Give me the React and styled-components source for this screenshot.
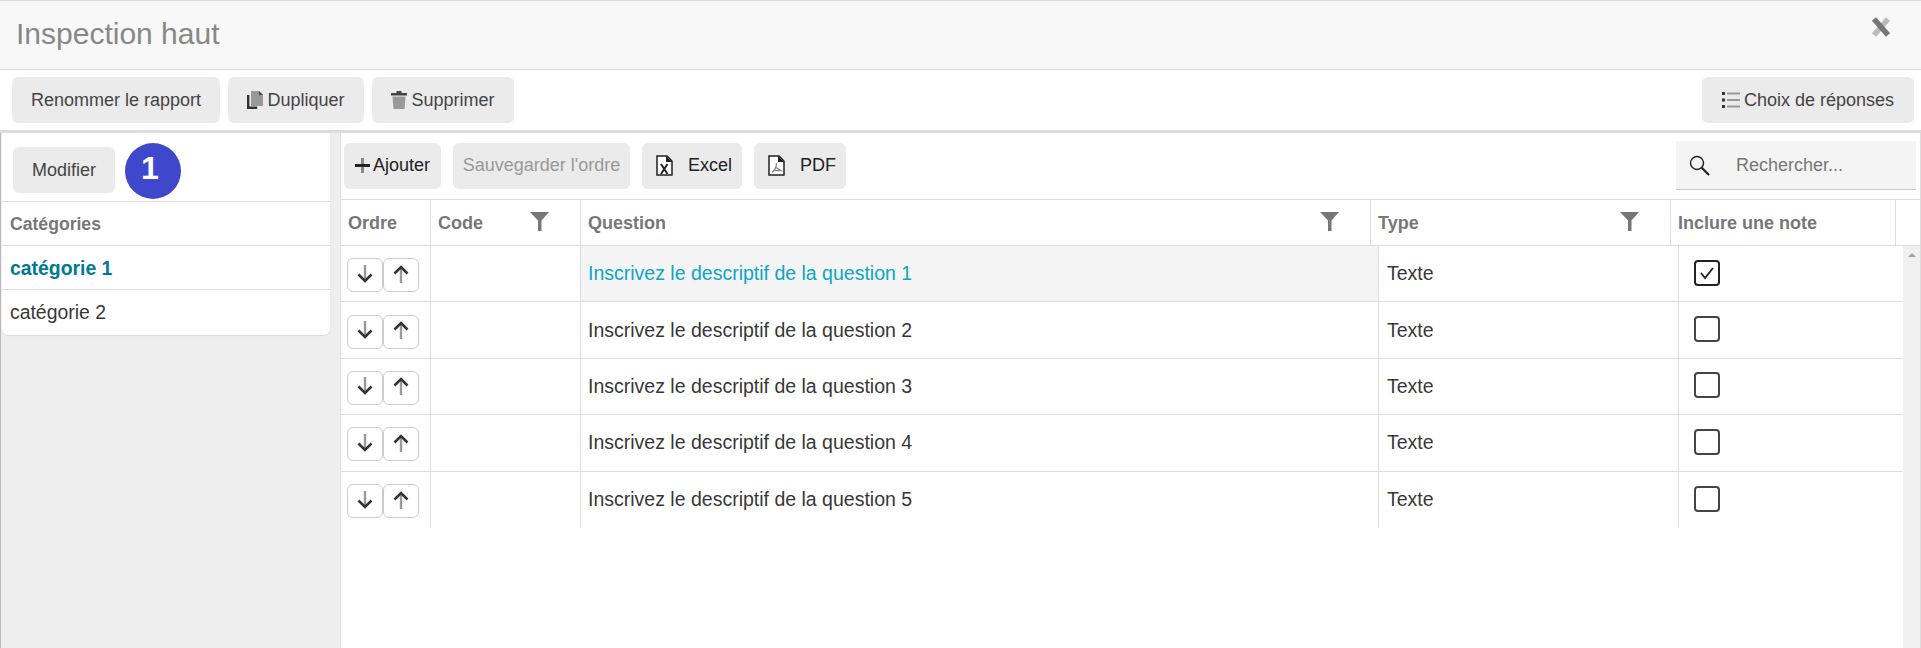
import React from "react";
import styled, { createGlobalStyle } from "styled-components";

const GlobalStyle = createGlobalStyle`
    html, body {
        margin: 0;
        padding: 0;
        background: #fff;
    }
    body {
        font-family: "Liberation Sans", Arial, sans-serif;
        color: #333;
    }
`;

const Page = styled.div`
    width: 1921px;
    height: 648px;
    display: flex;
    flex-direction: column;
    overflow: hidden;
`;

const Header = styled.header`
    height: 70px;
    box-sizing: border-box;
    flex: none;
    display: flex;
    justify-content: space-between;
    background: #f8f8f8;
    border-top: 1px solid #ddd;
    border-bottom: 1px solid #ddd;
    padding: 0 30px 0 16px;

    h1 {
        margin: 15px 0 0;
        font-size: 30px;
        line-height: 36px;
        font-weight: 400;
        color: #888;
    }
    svg {
        margin-top: 16px;
    }
`;

const TopBar = styled.div`
    height: 60px;
    flex: none;
    box-sizing: border-box;
    display: flex;
    align-items: flex-start;
    gap: 8px;
    padding: 7px 7px 0 12px;
`;

const Spacer = styled.div`
    flex: 1;
`;

const Button = styled.button`
    height: 46px;
    width: ${(p) => p.$w}px;
    flex: none;
    padding: 0;
    border: none;
    border-radius: 6px;
    background: #ebebeb;
    font-family: inherit;
    font-size: 18px;
    color: ${(p) => (p.$disabled ? "#999" : p.$dark ? "#222" : "#444")};
    display: flex;
    align-items: center;
    justify-content: center;
    gap: ${(p) => p.$gap ?? 4}px;
    cursor: pointer;
`;

const Body = styled.div`
    flex: 1;
    min-height: 0;
    display: flex;
    border-top: 3px solid #ddd;
    background: #eee;
`;

const Side = styled.aside`
    width: 340px;
    flex: none;
    box-sizing: border-box;
    padding: 0 10px 0 2px;
    border-left: 1px solid #bbb;
`;

const SideCard = styled.div`
    width: 328px;
    margin-left: -1px;
    background: #fff;
    border-radius: 0 0 6px 6px;
    box-shadow: 0 1px 1px #ddd;
    overflow: hidden;
`;

const SideBar = styled.div`
    height: 69px;
    box-sizing: border-box;
    display: flex;
    align-items: flex-start;
    gap: 10px;
    padding: 10px 0 0 11px;
    border-bottom: 1px solid #ddd;

    ${Button} {
        margin-top: 4px;
    }
`;

const Badge = styled.div`
    width: 56px;
    height: 56px;
    box-sizing: border-box;
    padding-right: 6px;
    border-radius: 50%;
    background: #3f48cc;
    color: #fff;
    font-size: 32px;
    font-weight: 700;
    line-height: 50px;
    text-align: center;
`;

const CatHead = styled.div`
    height: 44px;
    box-sizing: border-box;
    padding: 12px 0 0 8px;
    font-size: 17.6px;
    line-height: 20px;
    font-weight: 700;
    color: #777;
    border-bottom: 1px solid #ddd;
`;

const CatRow = styled.div`
    height: ${(p) => (p.$last ? 45 : 44)}px;
    box-sizing: border-box;
    padding-left: 8px;
    font-size: 19.4px;
    line-height: 44px;
    font-weight: ${(p) => (p.$active ? 700 : 400)};
    color: ${(p) => (p.$active ? "#007a94" : "#383838")};
    border-bottom: ${(p) => (p.$last ? "none" : "1px solid #ddd")};
`;

const Main = styled.main`
    flex: 1;
    min-width: 0;
    display: flex;
    flex-direction: column;
    background: #fff;
    border-left: 1px solid #ddd;
    border-right: 1px solid #ddd;
`;

const MainBar = styled.div`
    height: 67px;
    flex: none;
    box-sizing: border-box;
    display: flex;
    align-items: flex-start;
    gap: 12px;
    padding: 10px 4px 0 3px;
    border-bottom: 1px solid #ddd;

    ${Button} {
        padding-bottom: 2px;
    }
`;

const FileButton = styled(Button)`
    && {
        padding-left: 4px;
    }
`;

const Search = styled.div`
    width: 240px;
    height: 49px;
    box-sizing: border-box;
    margin-top: -2px;
    display: flex;
    align-items: center;
    gap: 26px;
    padding-left: 13px;
    background: #f4f4f4;
    border-bottom: 1px solid #ccc;
    font-size: 18px;
    color: #777;
`;

const HeadRow = styled.div`
    height: 46px;
    flex: none;
    box-sizing: border-box;
    display: grid;
    grid-template-columns: 90px 150px 790px 300px 225px 1fr;
    border-bottom: 1px solid #ddd;
`;

const HeadCell = styled.div`
    display: flex;
    align-items: center;
    justify-content: space-between;
    box-sizing: border-box;
    padding: 2px 31px 0 7px;
    font-size: 18px;
    font-weight: 700;
    color: #777;
    white-space: nowrap;
    border-right: 1px solid #ddd;

    svg {
        margin-top: -4px;
    }
`;

const RowsWrap = styled.div`
    display: flex;
    flex: 1;
    min-height: 0;
`;

const Rows = styled.div`
    flex: 1;
    min-width: 0;
`;

const Row = styled.div`
    height: 56.4px;
    box-sizing: border-box;
    display: grid;
    grid-template-columns: 90px 150px 798px 300px 1fr;
    border-bottom: ${(p) => (p.$last ? "none" : "1px solid #ddd")};
`;

const Cell = styled.div`
    display: flex;
    align-items: center;
    box-sizing: border-box;
    padding-left: ${(p) => p.$pad ?? 8}px;
    font-size: 19.5px;
    color: ${(p) => (p.$link ? "#0ea5c6" : "#383838")};
    background: ${(p) => (p.$hl ? "#f4f4f4" : "transparent")};
    border-right: ${(p) => (p.$end ? "none" : "1px solid #ddd")};
`;

const OrderBtns = styled.div`
    display: flex;
    margin-top: 3px;
`;

const ArrowBtn = styled.button`
    width: 36px;
    height: 34px;
    padding: 0 0 3px;
    display: flex;
    align-items: center;
    justify-content: center;
    background: #fff;
    border: 1px solid #ccc;
    border-radius: 6px;
`;

const Check = styled.span`
    width: 26px;
    height: 26px;
    box-sizing: border-box;
    margin-top: -2px;
    display: flex;
    align-items: center;
    justify-content: center;
    border: 2px solid ${(p) => (p.$on ? "#222" : "#444")};
    border-radius: 4px;
    background: #fff;
`;

const Scroll = styled.div`
    width: 17px;
    flex: none;
    background: #f0f0f0;
    display: flex;
    justify-content: center;
    align-items: flex-start;
    padding-top: 7px;
    box-sizing: border-box;

    i {
        width: 0;
        height: 0;
        border: 4px solid transparent;
        border-top: none;
        border-bottom: 4px solid #a3a3a3;
    }
`;

const Filter = () => (
    <svg width="19" height="19" viewBox="0 0 19 19">
        <path d="M0 0h19l-7.5 8.5V19h-3.5V8.5z" fill="#777" />
    </svg>
);

const Close = () => (
    <svg width="20" height="20" viewBox="0 0 20 20">
        <path d="M17 2L3 18" stroke="#bbb" strokeWidth="5.5" />
        <path d="M3 2L17 18" stroke="#777" strokeWidth="5.5" />
    </svg>
);

const CopyIcon = () => (
    <svg width="16" height="18" viewBox="0 0 16 18">
        <path d="M1.200 4v12.800h9" fill="none" stroke="#333" strokeWidth="2.400" />
        <path d="M4 0h8l4 4v11H4z" fill="#999" />
        <path d="M12 0l4 4h-4z" fill="#444" />
    </svg>
);

const TrashIcon = () => (
    <svg width="16" height="18" viewBox="0 0 16 18">
        <path d="M0 2h5.500V0h5v2H16v2.500H0z" fill="#444" />
        <path d="M1.500 5.500h13l-1 12.500h-11z" fill="#999" />
    </svg>
);

const ListIcon = () => (
    <svg width="18" height="16" viewBox="0 0 18 16">
        <path d="M0 0h3v3H0zM0 6.500h3v3H0zM0 13h3v3H0z" fill="#333" />
        <path d="M5 .5h13v2H5zM5 7h13v2H5zM5 13.500h13v2H5z" fill="#999" />
    </svg>
);

const PlusIcon = () => (
    <svg width="15" height="15" viewBox="0 0 15 15">
        <path d="M6 0h3v15H6z" fill="#888" />
        <path d="M0 6h15v3H0z" fill="#222" />
    </svg>
);

const ExcelIcon = () => (
    <svg width="17" height="21" viewBox="0 0 17 21">
        <path d="M1 1h10l5 5v14H1z" fill="#fff" stroke="#222" strokeWidth="1.500" />
        <path d="M10 1l6 6h-6z" fill="#222" />
        <path d="M5 9l6.500 10M11.500 9L5 19" stroke="#222" strokeWidth="2" />
    </svg>
);

const PdfIcon = () => (
    <svg width="17" height="21" viewBox="0 0 17 21">
        <path d="M1 1h10l5 5v14H1z" fill="#fff" stroke="#222" strokeWidth="1.500" />
        <path d="M10 1l6 6h-6z" fill="#222" />
        <path d="M8.500 8c0 4-1.500 7-4.500 9.500M8 12.500l5 3H6" fill="none" stroke="#888" strokeWidth="1.300" />
    </svg>
);

const SearchIcon = () => (
    <svg width="21" height="21" viewBox="0 0 21 21">
        <circle cx="8" cy="8" r="6.500" fill="none" stroke="#222" strokeWidth="1.400" />
        <path d="M12.500 12.500L20 20" stroke="#222" strokeWidth="2.200" />
    </svg>
);

const Arrow = ({ up }) => (
    <svg width="16" height="18" viewBox="0 0 16 18">
        {up ? (
            <>
                <path d="M8 3v15" stroke="#999" strokeWidth="2.400" />
                <path d="M1.500 8.500L8 2l6.500 6.500" fill="none" stroke="#333" strokeWidth="2.500" />
            </>
        ) : (
            <>
                <path d="M8 0v15" stroke="#999" strokeWidth="2.400" />
                <path d="M1.500 9.500L8 16l6.500-6.500" fill="none" stroke="#333" strokeWidth="2.500" />
            </>
        )}
    </svg>
);

const questions = [1, 2, 3, 4, 5];

export default function App() {
    return (
        <Page>
            <GlobalStyle />
            <Header>
                <h1>Inspection haut</h1>
                <Close />
            </Header>
            <TopBar>
                <Button $w={208}>Renommer le rapport</Button>
                <Button $w={136}>
                    <CopyIcon />
                    Dupliquer
                </Button>
                <Button $w={142}>
                    <TrashIcon />
                    Supprimer
                </Button>
                <Spacer />
                <Button $w={212}>
                    <ListIcon />
                    Choix de réponses
                </Button>
            </TopBar>
            <Body>
                <Side>
                    <SideCard>
                        <SideBar>
                            <Button $w={102}>Modifier</Button>
                            <Badge>1</Badge>
                        </SideBar>
                        <CatHead>Catégories</CatHead>
                        <CatRow $active>catégorie 1</CatRow>
                        <CatRow $last>catégorie 2</CatRow>
                    </SideCard>
                </Side>
                <Main>
                    <MainBar>
                        <Button $w={97} $dark $gap={3}>
                            <PlusIcon />
                            Ajouter
                        </Button>
                        <Button $w={177} $disabled>
                            Sauvegarder l'ordre
                        </Button>
                        <FileButton $w={100} $dark $gap={15}>
                            <ExcelIcon />
                            Excel
                        </FileButton>
                        <FileButton $w={92} $dark $gap={15}>
                            <PdfIcon />
                            PDF
                        </FileButton>
                        <Spacer />
                        <Search>
                            <SearchIcon />
                            Rechercher...
                        </Search>
                    </MainBar>
                    <HeadRow>
                        <HeadCell>Ordre</HeadCell>
                        <HeadCell>
                            Code
                            <Filter />
                        </HeadCell>
                        <HeadCell>
                            Question
                            <Filter />
                        </HeadCell>
                        <HeadCell>
                            Type
                            <Filter />
                        </HeadCell>
                        <HeadCell>Inclure une note</HeadCell>
                        <HeadCell />
                    </HeadRow>
                    <RowsWrap>
                        <Rows>
                            {questions.map((n) => (
                                <Row key={n} $last={n === 5}>
                                    <Cell $pad={6}>
                                        <OrderBtns>
                                            <ArrowBtn>
                                                <Arrow />
                                            </ArrowBtn>
                                            <ArrowBtn>
                                                <Arrow up />
                                            </ArrowBtn>
                                        </OrderBtns>
                                    </Cell>
                                    <Cell />
                                    <Cell $pad={7} $hl={n === 1} $link={n === 1}>
                                        Inscrivez le descriptif de la question {n}
                                    </Cell>
                                    <Cell>Texte</Cell>
                                    <Cell $pad={15} $end>
                                        <Check $on={n === 1}>
                                            {n === 1 && (
                                                <svg width="16" height="14" viewBox="0 0 16 14">
                                                    <path
                                                        d="M2 7l4 5 8-10"
                                                        fill="none"
                                                        stroke="#222"
                                                        strokeWidth="1.800"
                                                    />
                                                </svg>
                                            )}
                                        </Check>
                                    </Cell>
                                </Row>
                            ))}
                        </Rows>
                        <Scroll>
                            <i />
                        </Scroll>
                    </RowsWrap>
                </Main>
            </Body>
        </Page>
    );
}
